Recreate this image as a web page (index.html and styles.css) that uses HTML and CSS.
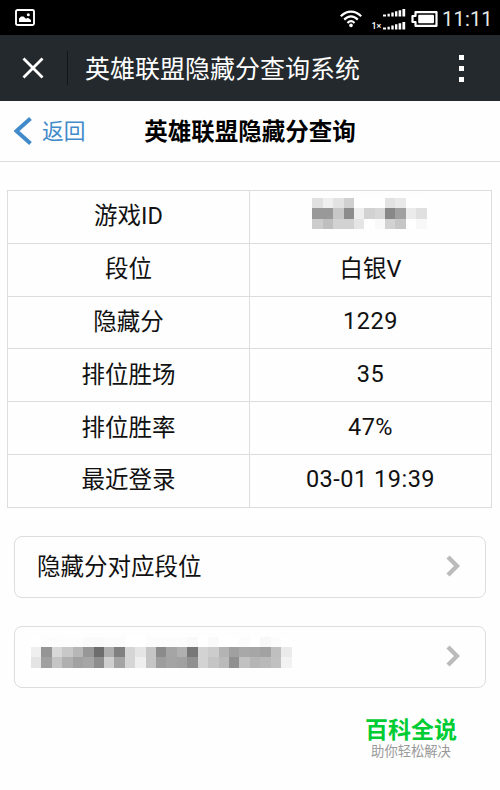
FILE: index.html
```
<!DOCTYPE html>
<html lang="zh-CN">
<head>
	<meta charset="UTF-8">
	<title>英雄联盟隐藏分查询系统</title>
	<link rel="stylesheet" href="styles.css">
	<script type="text/javascript">
		window.onload=function(){
			//每行的灰度值，两位一格
			var data={
				playerId:[
					"e0efe2d0ffffffe2e9ffff",
					"9999c78ceed2d888a0ebe0",
					"ccbfd2d2e5fff9d2c6fff8"
				],
				player:[
					"fffcfcfdfdfbfafcfbfffffcfcfcfcf9fffafffffcfff8fcff",
					"ef95d8c8b7976dae80d5e5c58ba5b077d3ccb3a0a8a6a2bfeb",
					"e4a0c5b0a2a68ecfa4d5efc59da4a190d3c5ba90c1b5b9c1f2"
				]
			};
			//画马赛克
			for(var id in data){
				var box=document.getElementById(id);
				data[id].forEach(function(row){
					for(var i=0;i<row.length;i+=2){
						var c=row.substr(i,2);
						var cell=document.createElement("i");
						cell.style.backgroundColor="#"+c+c+c;
						box.appendChild(cell);
					}
				});
			}
		};
	</script>
</head>
<body>
	<div class="status">
		<svg class="photo" width="20" height="17" viewBox="0 0 20 17">
			<rect x="1" y="1" width="18" height="15" rx="1.5" fill="none" stroke="#fff" stroke-width="1.9"/>
			<path d="M4 13V9.5L6 7.5H8.5L11 9.8L13 8.7L16 11V13Z" fill="#fff"/>
			<circle cx="13.3" cy="5.8" r="1.5" fill="#fff"/>
		</svg>
		<svg width="83" height="26" viewBox="0 0 83 26">
			<g fill="none" stroke="#fff" stroke-width="2.2">
				<path d="M.8 11.2C7 5 15 5 21.2 11.2"/>
				<path d="M4.2 14.6C8.5 10.3 13.5 10.3 17.8 14.6"/>
				<path d="M7.5 17.9C9.8 15.5 12.2 15.5 14.5 17.9"/>
			</g>
			<circle cx="11" cy="20.4" r="1.8" fill="#fff"/>
			<g fill="#fff">
				<path d="M43 9.5h3v2h-3zM47.5 8.8h2.3v2.7h-2.3zM51.3 7.6h2.4v3.9h-2.4zM55 6.3h2.4v5.2H55zM58.6 5.2h2.6v6.3h-2.6zM62.4 4h2.8v7.5h-2.8z"/>
				<path d="M43 9.5h3v2h-3zM47.5 8.8h2.3v2.7h-2.3zM51.3 7.6h2.4v3.9h-2.4zM55 6.3h2.4v5.2H55zM58.6 5.2h2.6v6.3h-2.6zM62.4 4h2.8v7.5h-2.8z" transform="translate(0 13)"/>
			</g>
			<text class="net" x="31.5" y="23.8">1×</text>
		</svg>
		<svg class="battery" width="27" height="16" viewBox="0 0 27 16">
			<path d="M1.5 5H4.5V1.2H25.5V14.8H4.5V11H1.5Z" fill="none" stroke="#fff" stroke-width="2.2" stroke-linejoin="round"/>
			<rect x="7.2" y="3.8" width="15.8" height="8.4" rx="1" fill="#fff"/>
		</svg>
		<span class="time">11:11</span>
	</div>
	<div class="bar">
		<svg class="close" width="22" height="22" viewBox="0 0 22 22">
			<path d="M1.5 1.5L20.5 20.5M20.5 1.5L1.5 20.5" stroke="#fff" stroke-width="2.8"/>
		</svg>
		<span class="bar-title">英雄联盟隐藏分查询系统</span>
		<div class="more"><i></i><i></i><i></i></div>
	</div>
	<div class="header">
		<div class="back">
			<svg width="18" height="28" viewBox="0 0 18 28">
				<path d="M16.5 1.5L2.5 14L16.5 26.5" fill="none" stroke="#428bca" stroke-width="4"/>
			</svg>
			<span>返回</span>
		</div>
		<h1>英雄联盟隐藏分查询</h1>
	</div>
	<div class="info">
		<div>游戏ID</div><div class="hidden-id"><div class="mosaic" id="playerId"></div></div>
		<div>段位</div><div>白银V</div>
		<div>隐藏分</div><div class="val">1229</div>
		<div>排位胜场</div><div class="val">35</div>
		<div>排位胜率</div><div class="val">47%</div>
		<div>最近登录</div><div class="val">03-01 19:39</div>
	</div>
	<div class="link">
		<span>隐藏分对应段位</span>
		<svg width="14" height="22" viewBox="0 0 14 22">
			<path d="M2 2L11 11L2 20" fill="none" stroke="#bbb" stroke-width="4.4"/>
		</svg>
	</div>
	<div class="link">
		<div class="mosaic wide" id="player"></div>
		<svg width="14" height="22" viewBox="0 0 14 22">
			<path d="M2 2L11 11L2 20" fill="none" stroke="#bbb" stroke-width="4.4"/>
		</svg>
	</div>
	<div class="brand">
		<p class="name">百科全说</p>
		<p class="slogan">助你轻松解决</p>
	</div>
</body>
</html>
```
FILE: styles.css
```
*{
	margin: 0;
	padding: 0;
	box-sizing: border-box;
}
body{
	height: 790px;
	overflow: hidden;
	background: #fefefe;
	color: #111;
	font-family: Roboto, "Noto Sans CJK SC", sans-serif;
	font-size: 23.5px;
}
svg{
	display: block;
	flex: none;
}
.status{
	display: flex;
	align-items: center;
	height: 35px;
	padding: 0 9px 0 15px;
	background: #000;
	color: #e8e8e8;
}
.photo{
	margin-right: auto;
}
.net{
	font-size: 9px;
	font-weight: 500;
	fill: #fff;
}
.battery{
	margin: 3px 4px 0 -12px;
}
.time{
	width: 49px;
	padding-top: 2px;
	font-size: 20px;
	letter-spacing: .2px;
	white-space: nowrap;
}
.bar{
	display: flex;
	align-items: center;
	height: 66px;
	padding: 0 36px 0 22px;
	background: #23292c;
	color: #fff;
}
.bar-title{
	margin-left: 23px;
	padding: 4px 0 0 17px;
	border-left: 1px solid #111618;
	font-size: 25px;
	line-height: 30px;
}
.more{
	display: flex;
	flex-direction: column;
	gap: 6px;
	margin-left: auto;
}
.more i{
	width: 5px;
	height: 5px;
	background: #fff;
}
.header{
	display: grid;
	grid-template-columns: 1fr auto 1fr;
	align-items: center;
	height: 61px;
	padding-left: 14px;
	padding-right: 14px;
	border-bottom: 1px solid #ddd;
}
.back{
	display: flex;
	align-items: center;
	gap: 10px;
	color: #428bca;
	font-size: 21.7px;
}
.back span{
	padding-bottom: 3px;
}
.header h1{
	padding-bottom: 3px;
	color: #000;
	font-size: 23.5px;
	font-weight: bold;
}
.info{
	display: grid;
	grid-template-columns: 242px 242px;
	grid-auto-rows: 52.8px;
	width: 485px;
	margin: 28px 0 0 7px;
	border-top: 1px solid #ddd;
	border-left: 1px solid #ddd;
}
.info > div{
	display: flex;
	align-items: center;
	justify-content: center;
	padding-bottom: 5px;
	border-right: 1px solid #ddd;
	border-bottom: 1px solid #ddd;
}
.info .val{
	padding-bottom: 3px;
	letter-spacing: .5px;
}
.info .hidden-id{
	padding: 0 2px 7px 0;
}
.mosaic{
	display: grid;
	grid-template-columns: repeat(11, 10.4px);
	grid-auto-rows: 10.4px;
}
.mosaic.wide{
	grid-template-columns: repeat(25, 10.43px);
	margin: 0 0 8px -6px;
}
.link{
	display: flex;
	align-items: center;
	justify-content: space-between;
	height: 62px;
	margin: 28px 14px 0;
	padding: 0 25px 1px 22px;
	border: 1px solid #ddd;
	border-radius: 8px;
}
.link span{
	padding-bottom: 3px;
}
.brand{
	width: 92px;
	margin: 30px 0 0 365px;
	text-align: center;
}
.name{
	color: #0c3;
	font-size: 23px;
	font-weight: bold;
	line-height: 26px;
}
.slogan{
	color: #999;
	font-size: 13.3px;
	line-height: 16px;
}
```
